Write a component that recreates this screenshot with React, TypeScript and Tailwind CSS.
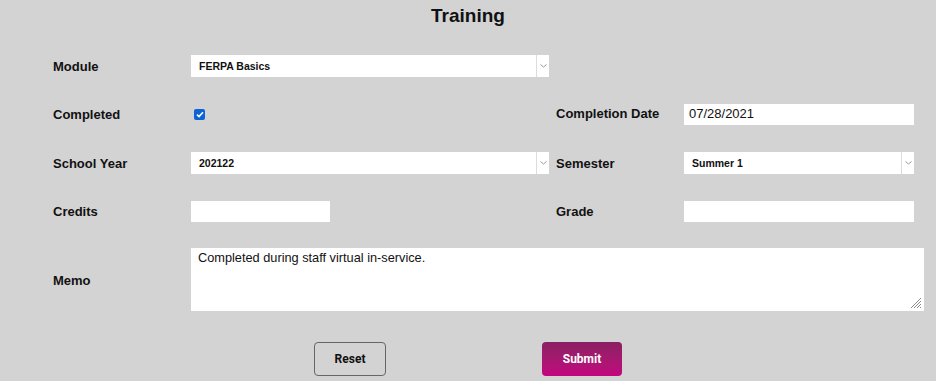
import React from "react";

const label = "pt-[2px] text-[13px] font-bold text-[#111]";
const labelFont = { fontFamily: '"Liberation Sans", Arial, sans-serif' };

function Chevron() {
  return (
    <svg width="7" height="4" viewBox="0 0 7 4" className="block">
      <path d="M0.5 0.5 L3.5 3 L6.5 0.5" fill="none" stroke="#9a9a9a" strokeWidth="1" />
    </svg>
  );
}

function SelectBox({ value, width }: { value: string; width: string }) {
  return (
    <div className={`flex h-[22px] bg-white ${width}`}>
      <div className="flex flex-1 items-center pl-2 pt-[1px] text-[10.5px] font-bold text-[#111]">{value}</div>
      <div className="flex w-[13px] items-center justify-center border-l border-[#dcdcdc]">
        <Chevron />
      </div>
    </div>
  );
}

export default function App() {
  return (
    <div
      className="h-[381px] w-[936px] overflow-hidden bg-[#d3d3d3] text-[#111]"
      style={labelFont}
    >
      <h1 className="pt-[5px] text-center text-[19px] font-bold leading-[22px]">Training</h1>

      <div className="mt-[15px] pl-[53px]">
        {/* Module */}
        <div className="flex h-[48px] items-center">
          <div className={`w-[138px] ${label}`}>Module</div>
          <SelectBox value="FERPA Basics" width="w-[358px]" />
        </div>

        {/* Completed / Completion Date */}
        <div className="flex h-[48px] items-center">
          <div className={`w-[138px] ${label}`}>Completed</div>
          <div className="w-[365px] pl-[3px]">
            <div className="flex h-[11px] w-[11px] items-center justify-center rounded-[2px] bg-[#0b63d6]">
              <svg width="8" height="7" viewBox="0 0 8 7">
                <path d="M1 3.6 L3 5.5 L7 1.2" fill="none" stroke="#fff" strokeWidth="1.6" />
              </svg>
            </div>
          </div>
          <div className={`w-[128px] ${label} -mt-[3px]`}>Completion Date</div>
          <div className="flex h-[21px] w-[230px] items-center bg-white pl-[5px] text-[13px]">
            07/28/2021
          </div>
        </div>

        {/* School Year / Semester */}
        <div className="mt-[1px] flex h-[48px] items-center">
          <div className={`w-[138px] ${label}`}>School Year</div>
          <div className="w-[365px]">
            <SelectBox value="202122" width="w-[358px]" />
          </div>
          <div className={`w-[128px] ${label}`}>Semester</div>
          <SelectBox value="Summer 1" width="w-[230px]" />
        </div>

        {/* Credits / Grade */}
        <div className="flex h-[48px] items-center">
          <div className={`w-[138px] ${label}`}>Credits</div>
          <div className="w-[365px]">
            <div className="h-[21px] w-[139px] bg-white" />
          </div>
          <div className={`w-[128px] ${label}`}>Grade</div>
          <div className="h-[21px] w-[230px] bg-white" />
        </div>

        {/* Memo */}
        <div className="mt-[13px] flex items-center">
          <div className={`w-[138px] ${label}`}>Memo</div>
          <div className="relative h-[63px] w-[733px] bg-white px-[7px] pt-[2px] text-[12.75px] leading-[15px]">
            Completed during staff virtual in-service.
            <svg width="12" height="12" viewBox="0 0 12 12" className="absolute bottom-[2px] right-[2px]">
              <path d="M11 1 L1 11 M11 4 L4 11 M11 7 L7 11 M11 10 L10 11" stroke="#8a8a8a" strokeWidth="1" />
            </svg>
          </div>
        </div>
      </div>

      {/* Buttons */}
      <div className="mt-[31px] flex justify-center gap-[156px]" style={{ fontFamily: "Roboto, Arial, sans-serif" }}>
        <button className="h-[34px] w-[72px] rounded-[4px] border border-[#666] text-[12px] font-bold text-[#111]">
          Reset
        </button>
        <button className="h-[34px] w-[80px] rounded-[4px] bg-gradient-to-b from-[#8a1f62] to-[#c3037f] text-[12px] font-bold text-white">
          Submit
        </button>
      </div>
    </div>
  );
}
